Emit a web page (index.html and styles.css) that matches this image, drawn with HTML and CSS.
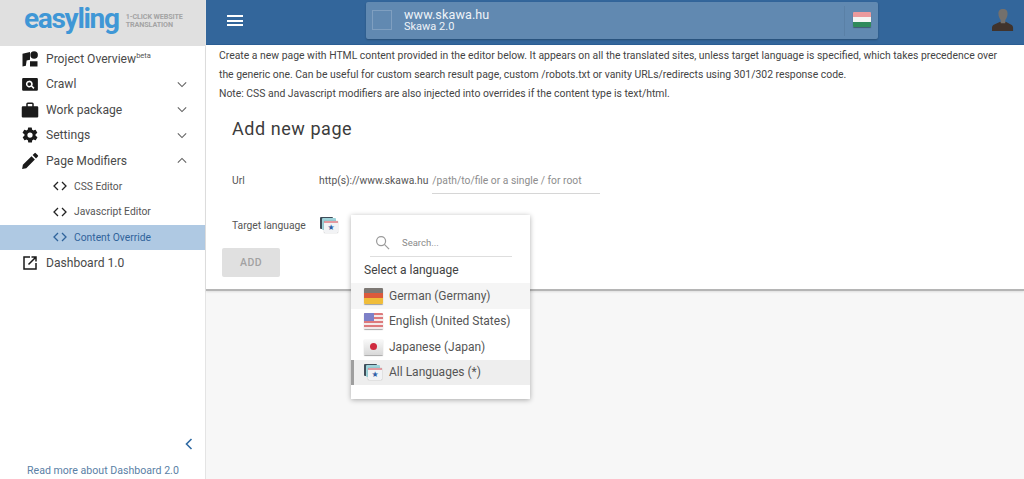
FILE: index.html
```html
<!DOCTYPE html>
<html lang="en">
<head>
<meta charset="utf-8">
<title>Easyling</title>
<link rel="stylesheet" href="styles.css">
</head>
<body>
<div class="app">
  <aside class="sidebar">
    <div class="logo">
      <span class="logo-word">easyling</span>
      <span class="logo-tag">1-CLICK WEBSITE<br>TRANSLATION</span>
    </div>
    <nav class="nav">
      <a class="item">
        <svg class="ico" viewBox="0 0 24 24"><path d="M2 5l10-2.500V13l-4.500 1L6.500 21 2 22z"/><circle cx="17.500" cy="6.500" r="5"/><path d="M12 15h10v7H12z"/></svg>
        <span class="label">Project Overview<sup class="beta">beta</sup></span>
      </a>
      <a class="item">
        <svg class="ico" viewBox="0 0 24 24"><path fill-rule="evenodd" d="M3 4h18a1.500 1.500 0 0 1 1.500 1.500v14A1.500 1.500 0 0 1 21 21H3a1.500 1.500 0 0 1-1.500-1.500v-14A1.500 1.500 0 0 1 3 4zm8 3.500a4.500 4.500 0 1 0 2.600 8.200l2.900 2.800 1.500-1.500-2.900-2.800A4.500 4.500 0 0 0 11 7.500zm0 2a2.500 2.500 0 1 1 0 5 2.500 2.500 0 0 1 0-5z"/></svg>
        <span class="label">Crawl</span>
        <svg class="chev" viewBox="0 0 12 8"><path d="M1 1.500l5 5 5-5"/></svg>
      </a>
      <a class="item">
        <svg class="ico" viewBox="0 0 24 24"><path fill-rule="evenodd" d="M9 2h6a2 2 0 0 1 2 2v3h4.500A1.500 1.500 0 0 1 23 8.500v12a1.500 1.500 0 0 1-1.500 1.500h-19A1.500 1.500 0 0 1 1 20.500v-12A1.500 1.500 0 0 1 2.500 7H7V4a2 2 0 0 1 2-2zm0 2v3h6V4z"/></svg>
        <span class="label">Work package</span>
        <svg class="chev" viewBox="0 0 12 8"><path d="M1 1.500l5 5 5-5"/></svg>
      </a>
      <a class="item">
        <svg class="ico" viewBox="0 0 24 24"><path d="M19.400 13a7.500 7.500 0 0 0 0-2l2.100-1.600a.5.500 0 0 0 .1-.6l-2-3.500a.5.500 0 0 0-.6-.2l-2.500 1a7.500 7.500 0 0 0-1.700-1l-.4-2.700a.5.500 0 0 0-.5-.4h-4a.5.500 0 0 0-.5.400l-.4 2.700a7.500 7.500 0 0 0-1.700 1l-2.500-1a.5.500 0 0 0-.6.200l-2 3.500a.5.500 0 0 0 .1.600L4.600 11a7.500 7.500 0 0 0 0 2l-2.100 1.600a.5.500 0 0 0-.1.600l2 3.500a.5.500 0 0 0 .6.200l2.500-1a7.500 7.500 0 0 0 1.700 1l.4 2.700a.5.500 0 0 0 .5.400h4a.5.500 0 0 0 .5-.4l.4-2.700a7.500 7.500 0 0 0 1.700-1l2.500 1a.5.500 0 0 0 .6-.2l2-3.500a.5.500 0 0 0-.1-.6zM12 15.500a3.500 3.500 0 1 1 0-7 3.500 3.500 0 0 1 0 7z"/></svg>
        <span class="label">Settings</span>
        <svg class="chev" viewBox="0 0 12 8"><path d="M1 1.500l5 5 5-5"/></svg>
      </a>
      <a class="item">
        <svg class="ico" viewBox="0 0 24 24"><path d="M1.500 22.500l1-5.500L14 5.500l4.500 4.500L7 21.500zM20 8.500L15.500 4 18 1.500a1.200 1.200 0 0 1 1.700 0l2.800 2.800a1.200 1.200 0 0 1 0 1.700z"/></svg>
        <span class="label">Page Modifiers</span>
        <svg class="chev" viewBox="0 0 12 8"><path d="M1 6.500l5-5 5 5"/></svg>
      </a>
      <a class="item sub">
        <svg class="code" viewBox="0 0 14 10"><path d="M5 1L1 5l4 4M9 1l4 4-4 4"/></svg>
        <span class="label">CSS Editor</span>
      </a>
      <a class="item sub">
        <svg class="code" viewBox="0 0 14 10"><path d="M5 1L1 5l4 4M9 1l4 4-4 4"/></svg>
        <span class="label">Javascript Editor</span>
      </a>
      <a class="item sub active">
        <svg class="code" viewBox="0 0 14 10"><path d="M5 1L1 5l4 4M9 1l4 4-4 4"/></svg>
        <span class="label">Content Override</span>
      </a>
      <a class="item">
        <svg class="ico" viewBox="0 0 24 24"><path d="M3 3h9v2H5v14h14v-7h2v9H3z"/><path d="M14 3h7v7h-2V6.400l-8.300 8.300-1.400-1.400L17.600 5H14z"/></svg>
        <span class="label">Dashboard 1.0</span>
      </a>
    </nav>
    <div class="collapse"><svg class="collapse-ico" viewBox="0 0 8 12"><path d="M6.500 1l-5 5 5 5"/></svg></div>
    <a class="readmore">Read more about Dashboard 2.0</a>
  </aside>

  <div class="column">
    <header class="topbar">
      <button class="burger" aria-label="Menu"><span></span><span></span><span></span></button>
      <div class="project">
        <span class="thumb"></span>
        <div class="project-text">
          <div class="project-url">www.skawa.hu</div>
          <div class="project-name">Skawa 2.0</div>
        </div>
        <span class="divider"></span>
        <span class="flag flag-hu"><i></i><i></i><i></i></span>
      </div>
      <svg class="avatar" viewBox="0 0 24 24">
        <path class="avatar-body" d="M9 14l3 1 3-1 5.500 3c1.500.8 2.500 2 2.500 3.500V24H0v-3.500C0 19 1 17.800 2.500 17z"/>
        <path class="avatar-head" d="M12 0c3.600 0 5 2.200 5 5 0 3-1.200 5.500-2.500 7v3.500h-5V12C8.200 10.500 7 8 7 5c0-2.800 1.400-5 5-5z"/>
      </svg>
    </header>

    <main class="main">
      <section class="panel">
        <p class="intro">Create a new page with HTML content provided in the editor below. It appears on all the translated sites, unless target language is specified, which takes precedence over the generic one. Can be useful for custom search result page, custom /robots.txt or vanity URLs/redirects using 301/302 response code.<br>Note: CSS and Javascript modifiers are also injected into overrides if the content type is text/html.</p>
        <h1 class="title">Add new page</h1>
        <div class="row row-url">
          <span class="field-label">Url</span>
          <span class="prefix">http(s)://www.skawa.hu</span>
          <span class="path-input">/path/to/file or a single / for root</span>
        </div>
        <div class="row row-lang">
          <span class="field-label">Target language</span>
          <span class="all-flag"><i class="c1"></i><i class="c2"></i><i class="c3">★</i></span>
        </div>
        <button class="add">ADD</button>
      </section>

      <div class="menu">
        <div class="search">
          <svg class="search-ico" viewBox="0 0 16 16"><circle cx="6.500" cy="6.500" r="4.800"/><path d="M10 10l5 5"/></svg>
          <span class="search-text">Search...</span>
        </div>
        <div class="menu-head">Select a language</div>
        <div class="opt hover"><span class="flag flag-de"><i></i><i></i><i></i></span>German (Germany)</div>
        <div class="opt"><span class="flag flag-us"><i></i><i></i><i></i></span>English (United States)</div>
        <div class="opt"><span class="flag flag-jp"><b></b></span>Japanese (Japan)</div>
        <div class="opt selected"><span class="all-flag"><i class="c1"></i><i class="c2"></i><i class="c3">★</i></span>All Languages (*)</div>
      </div>
    </main>
  </div>
</div>
</body>
</html>
```
FILE: styles.css
```css
* { box-sizing: border-box; }
html, body { margin: 0; height: 100%; overflow: hidden; }
body { font-family: Roboto, "Liberation Sans", sans-serif; color: #424242; background: #fff; }

.app { display: flex; height: 479px; }

/* Sidebar */
.sidebar { width: 206px; flex: none; border-right: 1px solid #e4e4e4; display: flex; flex-direction: column; background: #fff; }
.logo { height: 46px; flex: none; background: #e0e0e0; display: flex; align-items: center; padding: 0 0 1px 24px; gap: 7px; }
.logo-word { font: 700 28px/46px Roboto, sans-serif; color: #3f97d6; letter-spacing: -1.300px; margin-top: -7px; }
.logo-tag { font: 700 7.200px/8.500px Roboto, sans-serif; color: #a4a4a4; margin-top: -3px; letter-spacing: -.1px; white-space: nowrap; }

.nav { display: flex; flex-direction: column; }
.item { height: 25.500px; display: flex; align-items: center; padding: 0 0 .5px 21px; font-size: 12.100px; color: #4a4a4a; }
.ico { width: 18px; height: 18px; fill: #1a1a1a; flex: none; margin-right: 7px; }
.label { flex: 1; white-space: nowrap; }
.beta { font-size: 7.500px; line-height: 0; vertical-align: 5px; color: #555; }
.chev { width: 10px; height: 7px; fill: none; stroke: #616161; stroke-width: 1.300; margin-right: 18px; flex: none; }
.sub { padding: 0 0 0 53px; font-size: 10.300px; color: #555; }
.code { width: 14px; height: 10px; fill: none; stroke: #222; stroke-width: 1.300; margin-right: 7px; flex: none; }
.active { background: #afc9e3; color: #2f639b; }
.active .code { stroke: #2f639b; }

.collapse { margin-top: auto; padding: 0 12px 0 0; display: flex; justify-content: flex-end; height: 26px; flex: none; align-items: flex-start; }
.collapse-ico { width: 8px; height: 12px; fill: none; stroke: #2f6aa3; stroke-width: 1.600; }
.readmore { height: 15px; flex: none; padding-left: 27px; font-size: 10.600px; line-height: 13px; color: #5a7fa6; }

/* Top bar */
.column { flex: 1; min-width: 0; display: flex; flex-direction: column; }
.topbar { height: 45px; flex: none; margin-bottom: 1px; background: #33669b; display: flex; align-items: flex-start; padding: 2px 0 0 21px; border-bottom: 1px solid #2a5d93; }
.burger { width: 16px; height: 11px; padding: 0; margin-top: 13px; border: 0; background: none; display: flex; flex-direction: column; justify-content: space-between; }
.burger span { display: block; height: 2px; background: #fff; }
.project { width: 512px; height: 37px; margin-left: 123px; background: #6189b1; border-radius: 2px; display: flex; align-items: center; padding: 0 7px 0 6px; box-shadow: 0 1px 2px rgba(0,0,0,.25); }
.thumb { width: 20px; height: 20px; border: 1px solid #7f9fc0; flex: none; margin-top: -1px; }
.project-text { flex: 1; margin-left: 12px; color: #eef3f8; margin-top: -1px; }
.project-url { font-size: 12.600px; line-height: 13px; letter-spacing: .1px; }
.project-name { font-size: 11px; line-height: 12px; }
.divider { width: 1px; height: 30px; background: #5a80a6; margin-right: 8px; }
.avatar { width: 22px; height: 22px; margin-left: auto; margin-right: 10px; margin-top: 7px; flex: none; }
.avatar-head { fill: #74706c; }
.avatar-body { fill: #40332c; }

/* Flags */
.flag { width: 18px; height: 15px; display: flex; flex-direction: column; flex: none; border-radius: 1px; overflow: hidden; box-shadow: 0 1px 1px rgba(0,0,0,.35); }
.flag i { flex: 1; display: block; }
.flag-hu { margin-top: -2px; }
.flag-hu i:nth-child(1) { background: #eb9a9d; }
.flag-hu i:nth-child(2) { background: #f4f6f4; }
.flag-hu i:nth-child(3) { background: #2f8a5b; }
.flag-de i:nth-child(1) { background: #7d7874; }
.flag-de i:nth-child(2) { background: #dc5a3c; }
.flag-de i:nth-child(3) { background: #f0bd3a; }
.flag-us { background: repeating-linear-gradient(#dd7a7c 0 2px, #f3e9e9 2px 4px); }
.flag-us i { display: none; }
.flag-us::before { content: ""; width: 10px; height: 8px; background: #7d80c8; }
.flag-jp { background: linear-gradient(#fafafa, #d8d8d8); align-items: center; justify-content: center; }
.flag-jp b { width: 7px; height: 7px; border-radius: 50%; background: #cf2a3e; display: block; }

.all-flag { width: 18px; height: 16px; flex: none; display: block; position: relative; }
.all-flag i { position: absolute; display: block; border-radius: 1px; }
.all-flag .c1 { left: 0; top: 0; width: 13px; height: 12px; background: #3f4d59; }
.all-flag .c2 { left: 2px; top: 1px; width: 14px; height: 12px; background: #9ed3da; }
.all-flag .c3 { left: 4px; top: 4px; width: 14px; height: 12px; background: #f2f3f5; box-shadow: 0 0 1px rgba(0,0,0,.5); border-top: 2px solid #e49aa0; color: #2f5ea8; font: 8px/9px "DejaVu Sans", sans-serif; text-align: center; }

/* Main */
.main { flex: 1; position: relative; background: #f7f7f7; }
.panel { height: 245px; background: #fff; border-bottom: 2px solid #b5b5b5; padding: 0 14px 0 13px; box-shadow: 0 1px 2px rgba(0,0,0,.1); }
.intro { margin: 0; font-size: 10.400px; line-height: 18.800px; color: #444; padding-top: 1px; }
.title { margin: 14px 0 0 13px; font-size: 18px; font-weight: 400; line-height: 24px; color: #3c3c3c; letter-spacing: .55px; }
.row { display: flex; align-items: center; font-size: 10.300px; color: #555; }
.row-url { margin: 28px 0 0 13px; height: 22px; }
.field-label { width: 87px; flex: none; }
.prefix { white-space: nowrap; }
.path-input { width: 168px; margin: 3px 0 0 4px; height: 24px; line-height: 21px; border-bottom: 1px solid #d6d6d6; color: #8d8d8d; white-space: nowrap; }
.row-lang { margin: 24px 0 0 13px; height: 20px; }
.row-lang .all-flag { margin-left: 1px; }
.add { display: block; margin: 13px 0 0 3px; width: 58px; height: 29px; border: 0; border-radius: 2px; background: #e0e0e0; color: #a2a2a2; font: 500 10.500px Roboto, sans-serif; letter-spacing: .4px; padding: 0; }

/* Language menu */
.menu { position: absolute; left: 145px; top: 169px; width: 179px; height: 184px; background: #fff; box-shadow: 0 1px 5px rgba(0,0,0,.32); }
.search { margin: 0 18px 0 19px; height: 42px; border-bottom: 1px solid #dedede; display: flex; align-items: center; padding: 13px 0 0 5px; }
.search-ico { width: 15px; height: 15px; fill: none; stroke: #9a9a9a; stroke-width: 1.300; flex: none; }
.search-text { margin-left: 12px; font-size: 9.500px; color: #8a8a8a; }
.menu-head { height: 26px; padding-left: 13px; font-size: 12px; line-height: 26px; color: #424242; }
.opt { height: 25.500px; display: flex; align-items: center; gap: 6px; padding-left: 13px; font-size: 12px; color: #555; white-space: nowrap; }
.opt .flag { width: 19px; height: 16px; }
.hover { background: #f5f5f5; }
.selected { background: #eee; border-left: 3px solid #9e9e9e; padding-left: 10px; gap: 7px; }
```
